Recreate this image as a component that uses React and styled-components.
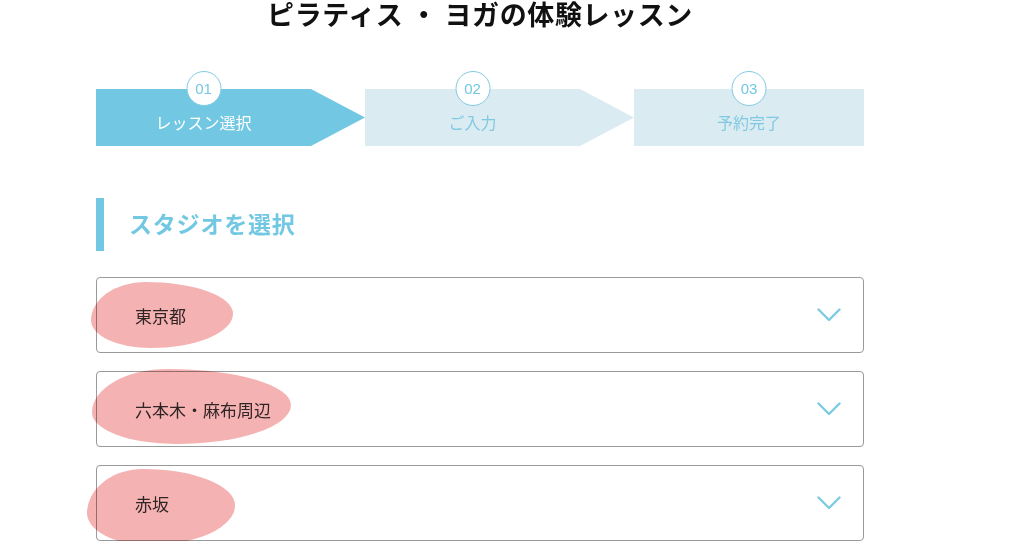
import React from "react";
import styled, { createGlobalStyle } from "styled-components";

const GlobalStyle = createGlobalStyle`
  html, body {
    margin: 0;
    padding: 0;
    background: #fff;
    font-family: "Noto Sans CJK JP", "Noto Sans", sans-serif;
    overflow: hidden;
  }
`;

const Page = styled.div`
  width: 768px;
  padding-left: 96px;
`;

const Title = styled.h1`
  margin: 0;
  height: 28px;
  line-height: 28px;
  font-size: 27px;
  font-weight: 700;
  color: #111;
  text-align: center;
  letter-spacing: 0.6px;
  white-space: nowrap;
`;

const Steps = styled.div`
  display: flex;
  margin-top: 61px;
  height: 57px;
`;

const Step = styled.div`
  position: relative;
  width: ${(p) => (p.$last ? "230px" : "269px")};
  height: 57px;
  flex-shrink: 0;
`;

const StepShape = styled.div`
  height: 100%;
  background: ${(p) => (p.$active ? "#72c8e3" : "#dbebf2")};
  clip-path: ${(p) =>
    p.$last
      ? "none"
      : "polygon(0 0, 215px 0, 269px 50%, 215px 100%, 0 100%)"};
`;

const StepBody = styled.div`
  position: absolute;
  top: 0;
  left: 0;
  width: ${(p) => (p.$last ? "230px" : "215px")};
  height: 57px;
  display: flex;
  align-items: center;
  justify-content: center;
  padding-top: 8px;
  box-sizing: border-box;
  font-size: 16px;
  color: ${(p) => (p.$active ? "#fff" : "#80c9e2")};
`;

const StepNum = styled.span`
  position: absolute;
  top: -18px;
  left: 50%;
  transform: translateX(-50%);
  width: 35px;
  height: 35px;
  box-sizing: border-box;
  border-radius: 50%;
  border: 1px solid #80cbe3;
  background: #fff;
  color: #72c8e3;
  font-family: "Liberation Sans", Arial, sans-serif;
  font-size: 15px;
  display: flex;
  align-items: center;
  justify-content: center;
`;

const Heading = styled.h2`
  margin: 52px 0 0;
  height: 53px;
  border-left: 8px solid #72c8e3;
  padding-left: 25px;
  padding-bottom: 4px;
  box-sizing: border-box;
  display: flex;
  align-items: center;
  font-size: 23px;
  font-weight: 700;
  color: #72c8e3;
  letter-spacing: 0.8px;
`;

const SelectList = styled.div`
  margin-top: 26px;
  display: flex;
  flex-direction: column;
  gap: 18px;
`;

const SelectBox = styled.div`
  position: relative;
  height: 76px;
  border: 1px solid #9a9a9a;
  border-radius: 4px;
  box-sizing: border-box;
  display: flex;
  align-items: center;
  justify-content: space-between;
  padding: 0 22px 0 38px;
  font-size: 17px;
  color: #333;
`;

const Marker = styled.div`
  position: absolute;
  background: #f4b2b2;
  mix-blend-mode: multiply;
  border-radius: 38% 62% 58% 42% / 58% 48% 52% 42%;
  pointer-events: none;
`;

const Chevron = () => (
  <svg width="24" height="14" viewBox="0 0 24 14" fill="none">
    <path
      d="M1.5 1.5 L12 12 L22.5 1.5"
      stroke="#7ccbe2"
      strokeWidth="2.4"
      strokeLinecap="round"
      strokeLinejoin="round"
    />
  </svg>
);

const steps = [
  { num: "01", label: "レッスン選択", active: true },
  { num: "02", label: "ご入力" },
  { num: "03", label: "予約完了", last: true },
];

const options = [
  { label: "東京都", marker: { left: -6, top: 4, width: 142, height: 66 } },
  { label: "六本木・麻布周辺", marker: { left: -5, top: -3, width: 199, height: 75 } },
  { label: "赤坂", marker: { left: -10, top: 3, width: 148, height: 76 } },
];

export default function App() {
  return (
    <>
      <GlobalStyle />
      <Page>
        <Title>ピラティス ・ ヨガの体験レッスン</Title>
        <Steps>
          {steps.map((s) => (
            <Step key={s.num} $last={s.last}>
              <StepShape $active={s.active} $last={s.last} />
              <StepBody $active={s.active} $last={s.last}>
                <StepNum>{s.num}</StepNum>
                {s.label}
              </StepBody>
            </Step>
          ))}
        </Steps>
        <Heading>スタジオを選択</Heading>
        <SelectList>
          {options.map((o) => (
            <SelectBox key={o.label}>
              <span>{o.label}</span>
              <Chevron />
              <Marker style={o.marker} />
            </SelectBox>
          ))}
        </SelectList>
      </Page>
    </>
  );
}
